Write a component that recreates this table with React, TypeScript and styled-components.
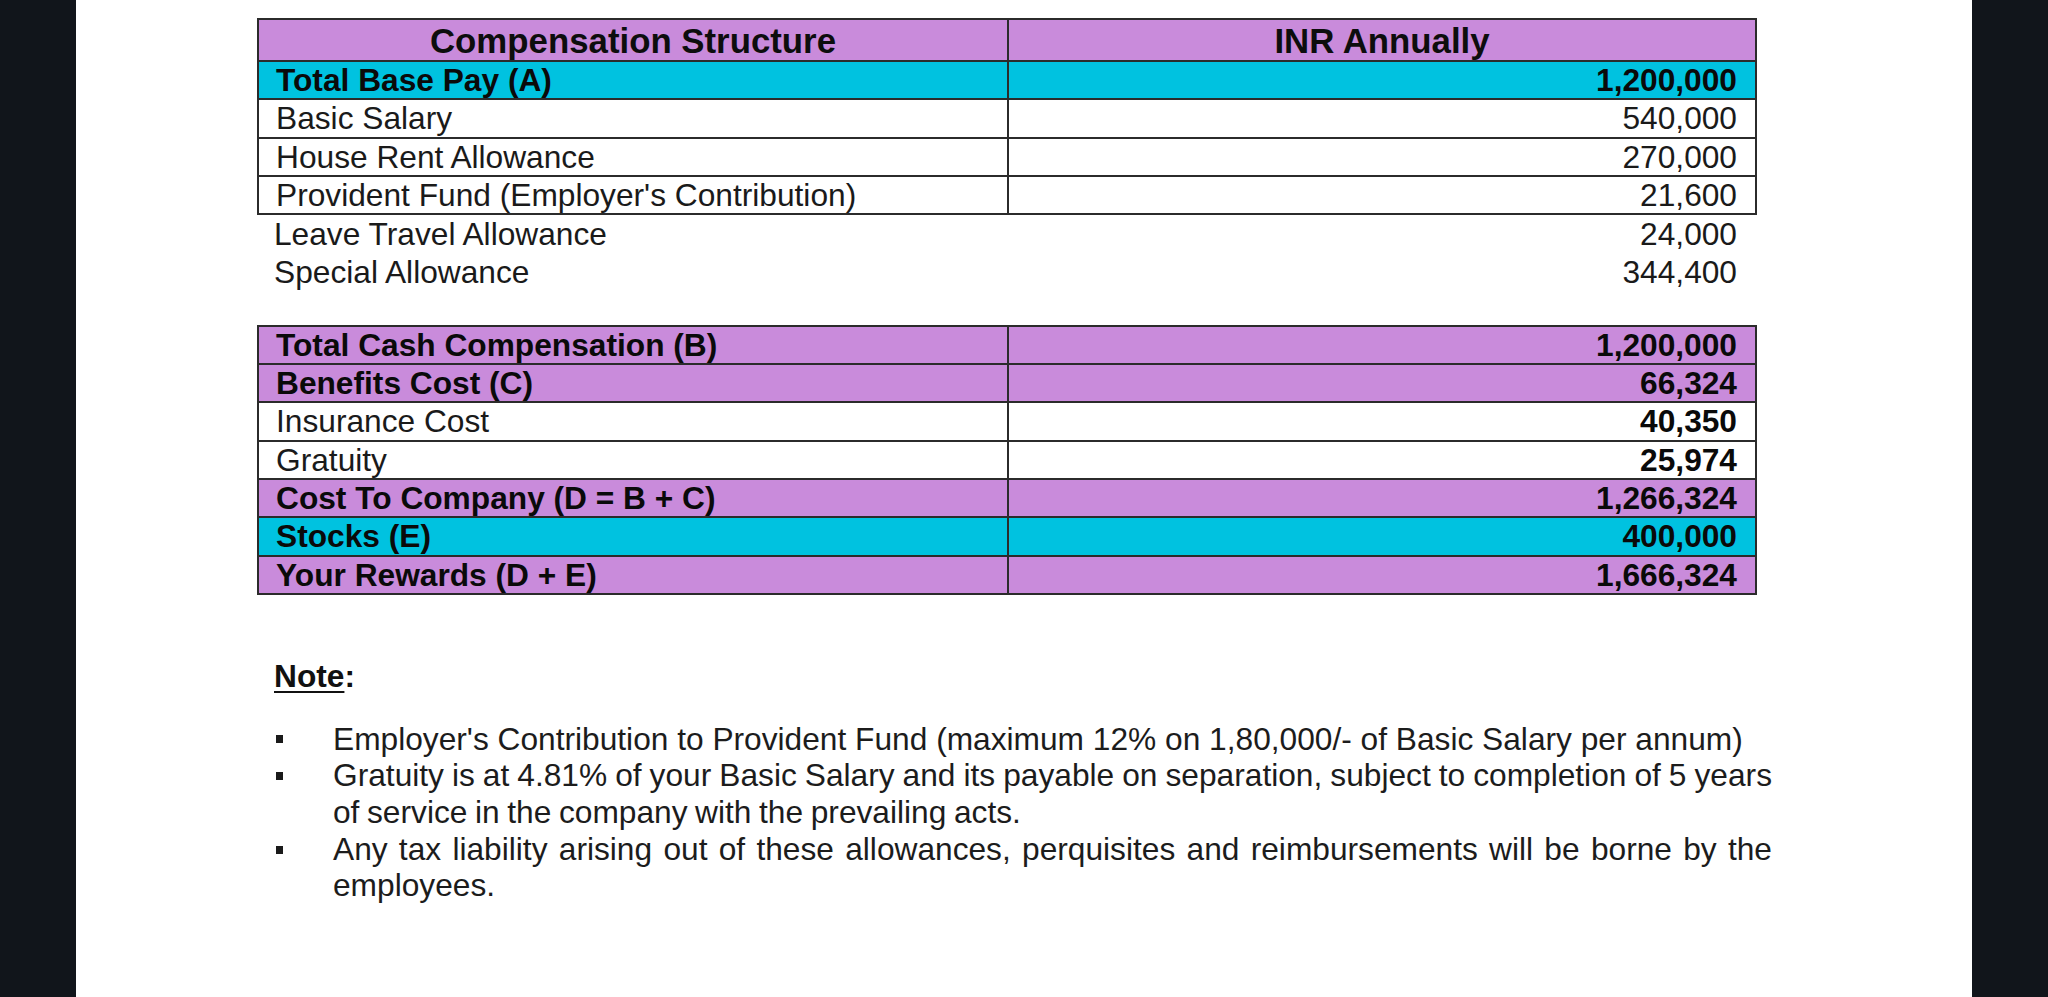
import React from "react";
import styled, { createGlobalStyle, css } from "styled-components";

const PURPLE = "#c98bdb";
const CYAN = "#00c2e0";
const LINE = "#2b2b2b";

const GlobalStyle = createGlobalStyle`
  html, body { margin: 0; padding: 0; background: #11151b; }
  body { font-family: "Liberation Sans", Arial, sans-serif; }
  #root { height: 997px; }
`;

const Viewport = styled.div`
  display: flex;
  justify-content: center;
  height: 997px;
  background: #11151b;
  overflow: hidden;
`;

const Page = styled.div`
  width: 1896px;
  height: 100%;
  background: #ffffff;
  box-sizing: border-box;
  padding: 18px 0 0 181px;
`;

const Sheet = styled.div`
  width: 1600px;
  color: #111;
  font-size: 31.7px;
`;

type Tone = "purple" | "cyan" | "white";

const toneBg: Record<Tone, string> = {
  purple: PURPLE,
  cyan: CYAN,
  white: "#ffffff",
};

const Table = styled.table<{ $gap?: number }>`
  width: 1498px;
  border-collapse: collapse;
  table-layout: fixed;
  border: 2px solid ${LINE};
  margin-top: ${(p) => p.$gap ?? 0}px;
`;

const Col = styled.col<{ $w: number }>`
  width: ${(p) => p.$w}px;
`;

const HeadRow = styled.tr`
  height: 42px;
  background: ${PURPLE};
`;

const HeadCell = styled.th`
  border: 2px solid ${LINE};
  padding: 3px 0 0;
  font-size: 34.8px;
  font-weight: 700;
  text-align: center;
  line-height: 1;
  color: #0d0d0d;
`;

const Row = styled.tr<{ $tone: Tone }>`
  height: 38.3px;
  background: ${(p) => toneBg[p.$tone]};
`;

const cellBase = css<{ $bold?: boolean }>`
  border: 2px solid ${LINE};
  padding: 1px 17px 0 17px;
  line-height: 1.05;
  white-space: nowrap;
  font-weight: ${(p) => (p.$bold ? 700 : 400)};
  color: ${(p) => (p.$bold ? "#0a0a0a" : "#1a1a1a")};
`;

const LabelCell = styled.td<{ $bold?: boolean }>`
  ${cellBase};
  text-align: left;
`;

const AmountCell = styled.td<{ $bold?: boolean }>`
  ${cellBase};
  text-align: right;
  padding-right: 18px;
`;

const LooseList = styled.div`
  width: 1498px;
`;

const LooseRow = styled.div`
  display: grid;
  grid-template-columns: 750px 1fr;
  align-items: center;
  height: 38.3px;
  color: #1a1a1a;
  line-height: 1.05;
`;

const LooseLabel = styled.span`
  padding-left: 17px;
`;

const LooseAmount = styled.span`
  text-align: right;
  padding-right: 18px;
`;

const NoteTitle = styled.div`
  margin-top: 63px;
  padding-left: 17px;
  font-weight: 700;
  line-height: 36.7px;
  color: #111;
`;

const Underlined = styled.span`
  text-decoration: underline;
  text-decoration-thickness: 2px;
  text-underline-offset: 4px;
`;

const Bullets = styled.ul`
  list-style: none;
  margin: 26px 0 0;
  padding: 0;
`;

const BulletItem = styled.li`
  display: grid;
  grid-template-columns: 76px 1439px;
  line-height: 36.7px;
  color: #1c1c1c;
`;

const BulletMark = styled.span`
  display: flex;
  align-items: center;
  height: 36.7px;
  padding-left: 19px;
  padding-top: 1px;
  box-sizing: border-box;

  &::before {
    content: "";
    width: 7px;
    height: 8px;
    background: #1a1a1a;
  }
`;

const BulletText = styled.span<{ $tight?: boolean }>`
  text-align: justify;
  word-spacing: ${(p) => (p.$tight ? "-1.2px" : "0")};
`;

type Line = {
  label: string;
  amount: string;
  tone: Tone;
  boldLabel?: boolean;
  boldAmount?: boolean;
};

const topRows: Line[] = [
  { label: "Total Base Pay (A)", amount: "1,200,000", tone: "cyan", boldLabel: true, boldAmount: true },
  { label: "Basic Salary", amount: "540,000", tone: "white" },
  { label: "House Rent Allowance", amount: "270,000", tone: "white" },
  { label: "Provident Fund (Employer's Contribution)", amount: "21,600", tone: "white" },
];

const looseRows = [
  { label: "Leave Travel Allowance", amount: "24,000" },
  { label: "Special Allowance", amount: "344,400" },
];

const bottomRows: Line[] = [
  { label: "Total Cash Compensation (B)", amount: "1,200,000", tone: "purple", boldLabel: true, boldAmount: true },
  { label: "Benefits Cost (C)", amount: "66,324", tone: "purple", boldLabel: true, boldAmount: true },
  { label: "Insurance Cost", amount: "40,350", tone: "white", boldAmount: true },
  { label: "Gratuity", amount: "25,974", tone: "white", boldAmount: true },
  { label: "Cost To Company (D = B + C)", amount: "1,266,324", tone: "purple", boldLabel: true, boldAmount: true },
  { label: "Stocks (E)", amount: "400,000", tone: "cyan", boldLabel: true, boldAmount: true },
  { label: "Your Rewards (D + E)", amount: "1,666,324", tone: "purple", boldLabel: true, boldAmount: true },
];

const notes = [
  { text: "Employer's Contribution to Provident Fund (maximum 12% on 1,80,000/- of Basic Salary per annum)" },
  {
    text: "Gratuity is at 4.81% of your Basic Salary and its payable on separation, subject to completion of 5 years of service in the company with the prevailing acts.",
    tight: true,
  },
  { text: "Any tax liability arising out of these allowances, perquisites and reimbursements will be borne by the employees." },
];

const Cols = () => (
  <colgroup>
    <Col $w={750} />
    <Col $w={748} />
  </colgroup>
);

const Rows = ({ rows }: { rows: Line[] }) => (
  <>
    {rows.map((r) => (
      <Row key={r.label} $tone={r.tone}>
        <LabelCell $bold={r.boldLabel}>{r.label}</LabelCell>
        <AmountCell $bold={r.boldAmount}>{r.amount}</AmountCell>
      </Row>
    ))}
  </>
);

export default function App() {
  return (
    <>
      <GlobalStyle />
      <Viewport>
        <Page>
          <Sheet>
            <Table>
              <Cols />
              <thead>
                <HeadRow>
                  <HeadCell>Compensation Structure</HeadCell>
                  <HeadCell>INR Annually</HeadCell>
                </HeadRow>
              </thead>
              <tbody>
                <Rows rows={topRows} />
              </tbody>
            </Table>

            <LooseList>
              {looseRows.map((r) => (
                <LooseRow key={r.label}>
                  <LooseLabel>{r.label}</LooseLabel>
                  <LooseAmount>{r.amount}</LooseAmount>
                </LooseRow>
              ))}
            </LooseList>

            <Table $gap={33}>
              <Cols />
              <tbody>
                <Rows rows={bottomRows} />
              </tbody>
            </Table>

            <NoteTitle>
              <Underlined>Note</Underlined>:
            </NoteTitle>

            <Bullets>
              {notes.map((n) => (
                <BulletItem key={n.text}>
                  <BulletMark />
                  <BulletText $tight={n.tight}>{n.text}</BulletText>
                </BulletItem>
              ))}
            </Bullets>
          </Sheet>
        </Page>
      </Viewport>
    </>
  );
}
